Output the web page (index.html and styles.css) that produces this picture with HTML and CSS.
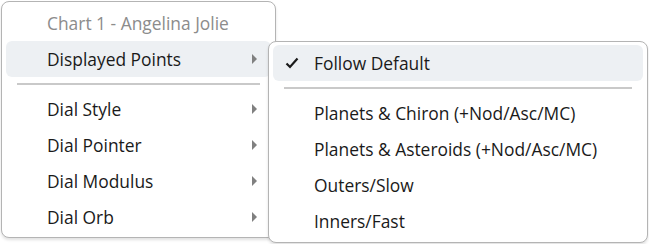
FILE: index.html
```html
<!DOCTYPE html>
<html>
<head>
<meta charset="utf-8">
<link rel="stylesheet" href="styles.css">
</head>
<body>
<div class="stage">
  <div class="menu main">
    <div class="item header"><span class="label">Chart 1 - Angelina Jolie</span></div>
    <div class="item active"><span class="label">Displayed Points</span><span class="arrow"></span></div>
    <div class="sep"></div>
    <div class="item"><span class="label">Dial Style</span><span class="arrow"></span></div>
    <div class="item"><span class="label">Dial Pointer</span><span class="arrow"></span></div>
    <div class="item"><span class="label">Dial Modulus</span><span class="arrow"></span></div>
    <div class="item"><span class="label">Dial Orb</span><span class="arrow"></span></div>
  </div>
  <div class="menu sub">
    <div class="item active">
      <svg class="check" width="14" height="12" viewBox="0 0 14 12"><path d="M1.5 6.5 L5 10 L12.5 1.5" fill="none" stroke="#1a1a1a" stroke-width="2.2"/></svg>
      <span class="label">Follow Default</span>
    </div>
    <div class="sep"></div>
    <div class="item"><span class="label">Planets &amp; Chiron (+Nod/Asc/MC)</span></div>
    <div class="item"><span class="label">Planets &amp; Asteroids (+Nod/Asc/MC)</span></div>
    <div class="item"><span class="label">Outers/Slow</span></div>
    <div class="item"><span class="label">Inners/Fast</span></div>
  </div>
</div>
</body>
</html>
```
FILE: styles.css
```css
html, body {
  margin: 0;
  padding: 0;
  background: #ffffff;
}
body {
  font-family: "Open Sans", "Noto Sans", sans-serif;
  font-size: 17.4px;
  color: #1a1a1a;
}
.stage {
  position: relative;
  width: 649px;
  height: 244px;
}
.menu {
  background: #ffffff;
  border: 1px solid #b4b4b4;
  border-radius: 8px;
  box-shadow: 0 2px 3px rgba(0, 0, 0, 0.12);
  box-sizing: border-box;
  padding: 3px 4px 3px 4px;
  display: flex;
  flex-direction: column;
}
.main {
  margin: 1px 0 0 1px;
  width: 275px;
  height: 237px;
}
.sub {
  position: absolute;
  left: 268px;
  top: 40px;
  width: 380px;
  height: 202px;
}
.item {
  height: 36px;
  flex: 0 0 36px;
  display: flex;
  align-items: center;
  position: relative;
  border-radius: 6px;
  padding-left: 41px;
  padding-right: 8px;
}
.item.active {
  background: #edf0f3;
}
.header .label {
  color: #8c8c8c;
}
.label {
  white-space: nowrap;
  flex: 1;
}
.arrow {
  width: 0;
  height: 0;
  border-top: 5px solid transparent;
  border-bottom: 5px solid transparent;
  border-left: 5px solid #808080;
  margin-right: 6px;
}
.sep {
  flex: 0 0 14px;
  height: 14px;
  display: flex;
  align-items: center;
  padding: 0 11px;
}
.sep::before {
  content: "";
  display: block;
  flex: 1;
  height: 2px;
  background: #c9c9c9;
}
.check {
  position: absolute;
  left: 12px;
  top: 12px;
}
```
